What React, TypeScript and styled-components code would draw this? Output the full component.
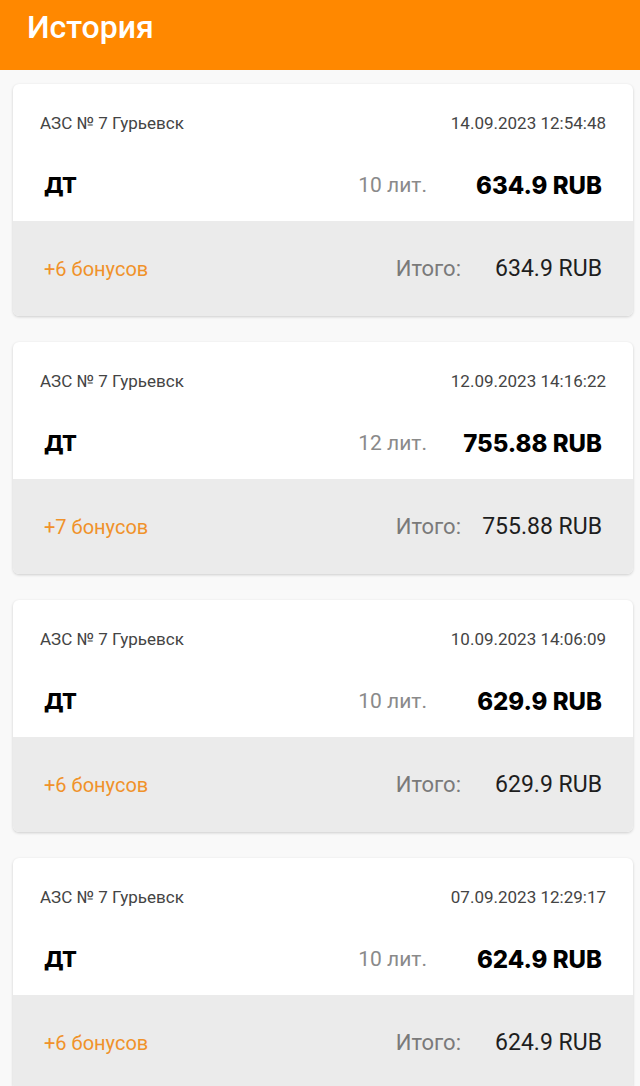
import React from 'react'
import styled, { createGlobalStyle } from 'styled-components'

const GlobalStyle = createGlobalStyle`
  html, body {
    margin: 0;
    padding: 0;
    background: #f9f9f9;
    font-family: Roboto, "Noto Sans", sans-serif;
  }
`

interface Purchase {
  station: string
  date: string
  fuel: string
  liters: number
  amount: string
  bonus: number
}

const purchases: Purchase[] = [
  { station: 'АЗС № 7 Гурьевск', date: '14.09.2023 12:54:48', fuel: 'ДТ', liters: 10, amount: '634.9', bonus: 6 },
  { station: 'АЗС № 7 Гурьевск', date: '12.09.2023 14:16:22', fuel: 'ДТ', liters: 12, amount: '755.88', bonus: 7 },
  { station: 'АЗС № 7 Гурьевск', date: '10.09.2023 14:06:09', fuel: 'ДТ', liters: 10, amount: '629.9', bonus: 6 },
  { station: 'АЗС № 7 Гурьевск', date: '07.09.2023 12:29:17', fuel: 'ДТ', liters: 10, amount: '624.9', bonus: 6 },
]

const Page = styled.div`
  height: 1086px;
  overflow: hidden;
`

const Header = styled.header`
  height: 70px;
  background: #ff8800;
  box-sizing: border-box;
  padding: 5px 27px 0;
`

const Title = styled.h1`
  margin: 0;
  color: #fff;
  font-size: 32px;
  font-weight: 500;
  line-height: 44px;
`

const List = styled.div`
  display: flex;
  flex-direction: column;
  gap: 26px;
  padding: 14px 7px 0 13px;
`

const Card = styled.div`
  background: #fff;
  border-radius: 6px;
  overflow: hidden;
  box-shadow: 0 1px 3px rgba(0, 0, 0, 0.18);
`

const Top = styled.div`
  height: 137px;
  display: flex;
  flex-direction: column;
`

const MetaRow = styled.div`
  display: flex;
  justify-content: space-between;
  align-items: center;
  height: 78px;
  padding: 0 27px;
  font-size: 17px;
  color: #444;
`

const FuelRow = styled.div`
  display: flex;
  align-items: center;
  height: 46px;
  padding: 0 31px;
`

const Fuel = styled.div`
  flex: 1;
  font-family: Inter, "Noto Sans", sans-serif;
  font-weight: 800;
  font-size: 22px;
  color: #000;
`

const Liters = styled.div`
  font-size: 21px;
  color: #8a8a8a;
`

const Amount = styled.div`
  width: 175px;
  text-align: right;
  font-family: Inter, "Noto Sans", sans-serif;
  font-weight: 800;
  font-size: 24px;
  color: #000;
`

const Bottom = styled.div`
  height: 95px;
  background: #ebebeb;
  display: flex;
  align-items: center;
  padding: 0 31px;
`

const Bonus = styled.div`
  flex: 1;
  font-size: 20px;
  color: #f0922a;
`

const TotalLabel = styled.div`
  font-size: 22px;
  color: #7a7a7a;
`

const TotalValue = styled.div`
  width: 141px;
  text-align: right;
  font-size: 23px;
  color: #1e1e1e;
`

const PurchaseCard: React.FC<{ item: Purchase }> = ({ item }) => (
  <Card>
    <Top>
      <MetaRow>
        <span>{item.station}</span>
        <span>{item.date}</span>
      </MetaRow>
      <FuelRow>
        <Fuel>{item.fuel}</Fuel>
        <Liters>{item.liters} лит.</Liters>
        <Amount>{item.amount} RUB</Amount>
      </FuelRow>
    </Top>
    <Bottom>
      <Bonus>+{item.bonus} бонусов</Bonus>
      <TotalLabel>Итого:</TotalLabel>
      <TotalValue>{item.amount} RUB</TotalValue>
    </Bottom>
  </Card>
)

const App: React.FC = () => (
  <Page>
    <GlobalStyle />
    <Header>
      <Title>История</Title>
    </Header>
    <List>
      {purchases.map((p) => (
        <PurchaseCard key={p.date} item={p} />
      ))}
    </List>
  </Page>
)

export default App
